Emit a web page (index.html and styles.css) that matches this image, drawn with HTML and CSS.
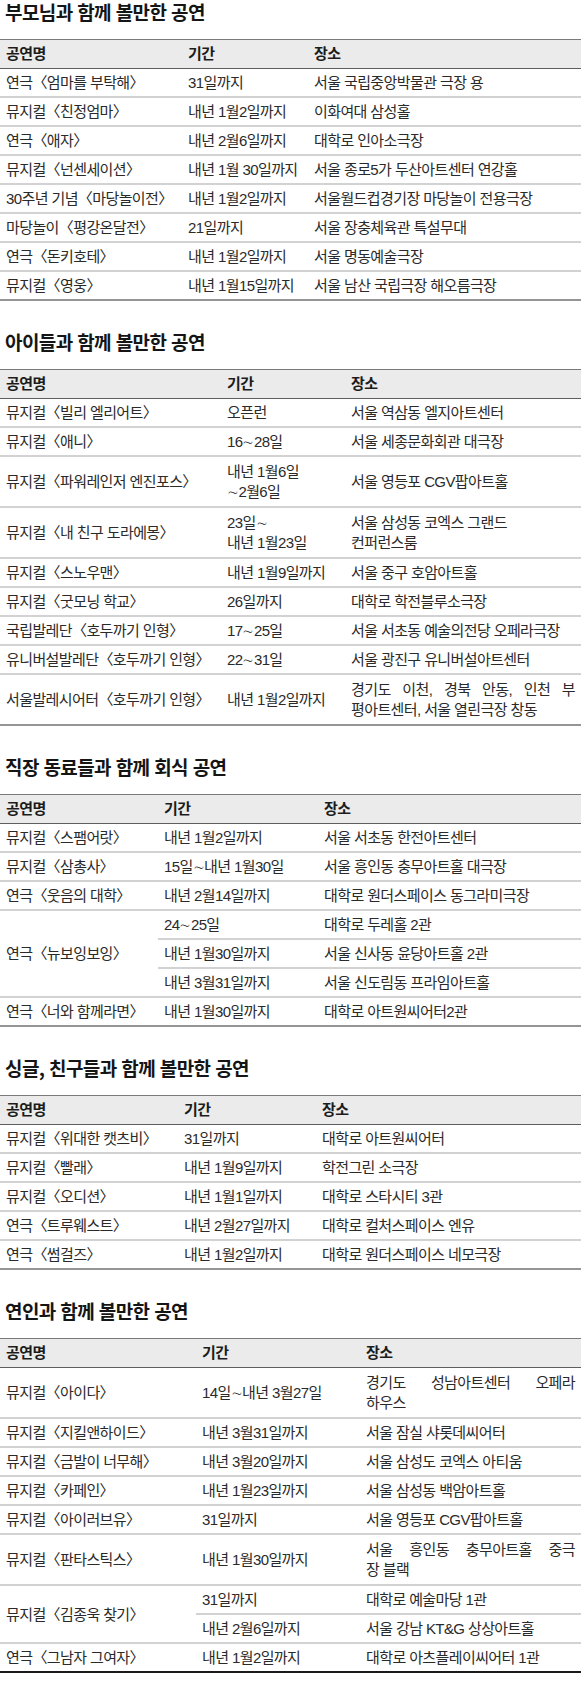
FILE: index.html
```html
<!DOCTYPE html>
<html lang="ko">
<head>
<meta charset="utf-8">
<title>함께 볼만한 공연</title>
<link rel="stylesheet" href="styles.css">
</head>
<body>
<main class="page">

<section class="block first">
  <h2 class="title">부모님과 함께 볼만한 공연</h2>
  <table class="grid t1">
    <colgroup><col class="c1"><col class="c2"><col></colgroup>
    <thead><tr><th>공연명</th><th>기간</th><th>장소</th></tr></thead>
    <tbody>
      <tr><td>연극〈엄마를 부탁해〉</td><td>31일까지</td><td>서울 국립중앙박물관 극장 용</td></tr>
      <tr><td>뮤지컬〈친정엄마〉</td><td>내년 1월2일까지</td><td>이화여대 삼성홀</td></tr>
      <tr><td>연극〈애자〉</td><td>내년 2월6일까지</td><td>대학로 인아소극장</td></tr>
      <tr><td>뮤지컬〈넌센세이션〉</td><td>내년 1월 30일까지</td><td>서울 종로5가 두산아트센터 연강홀</td></tr>
      <tr><td>30주년 기념〈마당놀이전〉</td><td>내년 1월2일까지</td><td>서울월드컵경기장 마당놀이 전용극장</td></tr>
      <tr><td>마당놀이〈평강온달전〉</td><td>21일까지</td><td>서울 장충체육관 특설무대</td></tr>
      <tr><td>연극〈돈키호테〉</td><td>내년 1월2일까지</td><td>서울 명동예술극장</td></tr>
      <tr><td>뮤지컬〈영웅〉</td><td>내년 1월15일까지</td><td>서울 남산 국립극장 해오름극장</td></tr>
    </tbody>
  </table>
</section>

<section class="block">
  <h2 class="title">아이들과 함께 볼만한 공연</h2>
  <table class="grid t2">
    <colgroup><col class="c1"><col class="c2"><col></colgroup>
    <thead><tr><th>공연명</th><th>기간</th><th>장소</th></tr></thead>
    <tbody>
      <tr><td>뮤지컬〈빌리 엘리어트〉</td><td>오픈런</td><td>서울 역삼동 엘지아트센터</td></tr>
      <tr><td>뮤지컬〈애니〉</td><td>16∼28일</td><td>서울 세종문화회관 대극장</td></tr>
      <tr class="two"><td>뮤지컬〈파워레인저 엔진포스〉</td><td>내년 1월6일<br>∼2월6일</td><td>서울 영등포 CGV팝아트홀</td></tr>
      <tr class="two"><td>뮤지컬〈내 친구 도라에몽〉</td><td>23일∼<br>내년 1월23일</td><td>서울 삼성동 코엑스 그랜드<br>컨퍼런스룸</td></tr>
      <tr><td>뮤지컬〈스노우맨〉</td><td>내년 1월9일까지</td><td>서울 중구 호암아트홀</td></tr>
      <tr><td>뮤지컬〈굿모닝 학교〉</td><td>26일까지</td><td>대학로 학전블루소극장</td></tr>
      <tr><td>국립발레단〈호두까기 인형〉</td><td>17∼25일</td><td>서울 서초동 예술의전당 오페라극장</td></tr>
      <tr><td>유니버설발레단〈호두까기 인형〉</td><td>22∼31일</td><td>서울 광진구 유니버설아트센터</td></tr>
      <tr class="two"><td>서울발레시어터〈호두까기 인형〉</td><td>내년 1월2일까지</td><td><span class="jl">경기도 이천, 경북 안동, 인천 부</span>평아트센터, 서울 열린극장 창동</td></tr>
    </tbody>
  </table>
</section>

<section class="block">
  <h2 class="title">직장 동료들과 함께 회식 공연</h2>
  <table class="grid t3">
    <colgroup><col class="c1"><col class="c2"><col></colgroup>
    <thead><tr><th>공연명</th><th>기간</th><th>장소</th></tr></thead>
    <tbody>
      <tr><td>뮤지컬〈스팸어랏〉</td><td>내년 1월2일까지</td><td>서울 서초동 한전아트센터</td></tr>
      <tr><td>뮤지컬〈삼총사〉</td><td>15일∼내년 1월30일</td><td>서울 흥인동 충무아트홀 대극장</td></tr>
      <tr><td>연극〈웃음의 대학〉</td><td>내년 2월14일까지</td><td>대학로 원더스페이스 동그라미극장</td></tr>
      <tr><td rowspan="3">연극〈뉴보잉보잉〉</td><td>24∼25일</td><td>대학로 두레홀 2관</td></tr>
      <tr><td>내년 1월30일까지</td><td>서울 신사동 윤당아트홀 2관</td></tr>
      <tr><td>내년 3월31일까지</td><td>서울 신도림동 프라임아트홀</td></tr>
      <tr><td>연극〈너와 함께라면〉</td><td>내년 1월30일까지</td><td>대학로 아트원씨어터2관</td></tr>
    </tbody>
  </table>
</section>

<section class="block">
  <h2 class="title">싱글, 친구들과 함께 볼만한 공연</h2>
  <table class="grid t4">
    <colgroup><col class="c1"><col class="c2"><col></colgroup>
    <thead><tr><th>공연명</th><th>기간</th><th>장소</th></tr></thead>
    <tbody>
      <tr><td>뮤지컬〈위대한 캣츠비〉</td><td>31일까지</td><td>대학로 아트원씨어터</td></tr>
      <tr><td>뮤지컬〈빨래〉</td><td>내년 1월9일까지</td><td>학전그린 소극장</td></tr>
      <tr><td>뮤지컬〈오디션〉</td><td>내년 1월1일까지</td><td>대학로 스타시티 3관</td></tr>
      <tr><td>연극〈트루웨스트〉</td><td>내년 2월27일까지</td><td>대학로 컬처스페이스 엔유</td></tr>
      <tr><td>연극〈썸걸즈〉</td><td>내년 1월2일까지</td><td>대학로 원더스페이스 네모극장</td></tr>
    </tbody>
  </table>
</section>

<section class="block">
  <h2 class="title">연인과 함께 볼만한 공연</h2>
  <table class="grid t5">
    <colgroup><col class="c1"><col class="c2"><col></colgroup>
    <thead><tr><th>공연명</th><th>기간</th><th>장소</th></tr></thead>
    <tbody>
      <tr class="two"><td>뮤지컬〈아이다〉</td><td>14일∼내년 3월27일</td><td><span class="jl">경기도 성남아트센터 오페라</span>하우스</td></tr>
      <tr><td>뮤지컬〈지킬앤하이드〉</td><td>내년 3월31일까지</td><td>서울 잠실 샤롯데씨어터</td></tr>
      <tr><td>뮤지컬〈금발이 너무해〉</td><td>내년 3월20일까지</td><td>서울 삼성도 코엑스 아티움</td></tr>
      <tr><td>뮤지컬〈카페인〉</td><td>내년 1월23일까지</td><td>서울 삼성동 백암아트홀</td></tr>
      <tr><td>뮤지컬〈아이러브유〉</td><td>31일까지</td><td>서울 영등포 CGV팝아트홀</td></tr>
      <tr class="two"><td>뮤지컬〈판타스틱스〉</td><td>내년 1월30일까지</td><td><span class="jl">서울 흥인동 충무아트홀 중극</span>장 블랙</td></tr>
      <tr><td rowspan="2">뮤지컬〈김종욱 찾기〉</td><td>31일까지</td><td>대학로 예술마당 1관</td></tr>
      <tr><td>내년 2월6일까지</td><td>서울 강남 KT&amp;G 상상아트홀</td></tr>
      <tr><td>연극〈그남자 그여자〉</td><td>내년 1월2일까지</td><td>대학로 아츠플레이씨어터 1관</td></tr>
    </tbody>
  </table>
</section>

</main>
</body>
</html>
```

FILE: styles.css
```css
html, body {
  margin: 0;
  padding: 0;
  background: #ffffff;
}

body {
  font-family: "Liberation Sans Narrow", "Liberation Sans", "Noto Sans CJK KR", sans-serif;
  color: #2a2a2a;
  width: 581px;
}

.page {
  display: flex;
  flex-direction: column;
}

.block {
  margin-top: 29px;
}

.block.first {
  margin-top: 0;
}

.title {
  margin: 0 0 15px 0;
  padding-left: 5px;
  font-family: "Noto Sans CJK KR", sans-serif;
  font-size: 19px;
  line-height: 24px;
  font-weight: 700;
  letter-spacing: -0.6px;
  color: #151515;
}

.grid {
  width: 100%;
  border-collapse: collapse;
  table-layout: fixed;
  font-size: 15px;
  letter-spacing: -0.6px;
}

.grid th {
  text-align: left;
  font-weight: 700;
  color: #1c1c1c;
  background: #ebebeb;
  padding: 4px 0 4px 6px;
  line-height: 20px;
  border-top: 1px solid #7a7a7a;
  border-bottom: 1px solid #5e5e5e;
}

.grid td {
  padding: 4px 6px 3px 6px;
  line-height: 20px;
  white-space: nowrap;
  vertical-align: middle;
  border-bottom: 2px solid #d2d2d2;
}

.grid tr.two td {
  padding-top: 5px;
  padding-bottom: 4px;
}

.grid tbody tr:last-child td {
  border-bottom: 2px solid #959595;
}

.t5 tbody tr:last-child td {
  border-bottom: 2px solid #1a1a1a;
}

.jl {
  display: block;
  text-align: justify;
  text-align-last: justify;
}

.t1 .c1 { width: 182px; }
.t1 .c2 { width: 126px; }

.t2 .c1 { width: 221px; }
.t2 .c2 { width: 124px; }

.t3 .c1 { width: 158px; }
.t3 .c2 { width: 160px; }

.t4 .c1 { width: 178px; }
.t4 .c2 { width: 138px; }

.t5 .c1 { width: 196px; }
.t5 .c2 { width: 164px; }
```
